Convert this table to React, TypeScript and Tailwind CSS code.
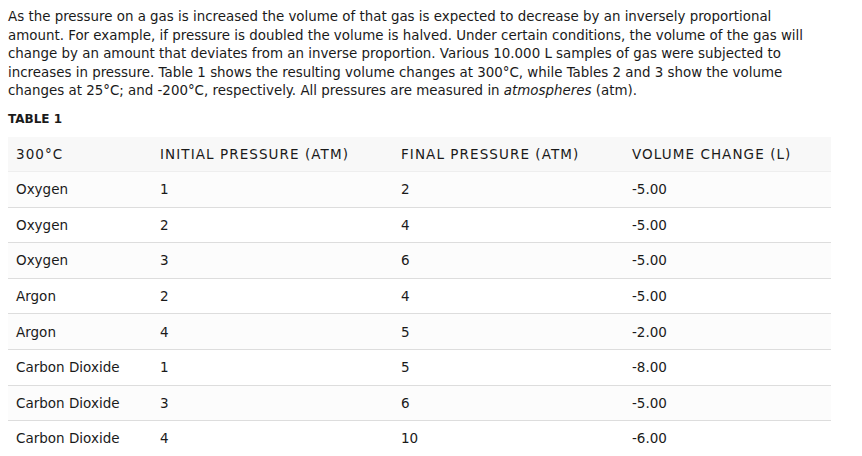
const rows: [string, string, string, string][] = [
  ['Oxygen', '1', '2', '-5.00'],
  ['Oxygen', '2', '4', '-5.00'],
  ['Oxygen', '3', '6', '-5.00'],
  ['Argon', '2', '4', '-5.00'],
  ['Argon', '4', '5', '-2.00'],
  ['Carbon Dioxide', '1', '5', '-8.00'],
  ['Carbon Dioxide', '3', '6', '-5.00'],
  ['Carbon Dioxide', '4', '10', '-6.00'],
]

const headers = ['300°C', 'INITIAL PRESSURE (ATM)', 'FINAL PRESSURE (ATM)', 'VOLUME CHANGE (L)']

export default function App() {
  return (
    <div className="bg-white px-2 pt-[8px] text-[#1a1a1a] font-['DejaVu_Sans',sans-serif]">
      <p className="text-[13.4px] leading-[18.5px] w-[818px]">
        As the pressure on a gas is increased the volume of that gas is expected to decrease by an inversely
        proportional amount. For example, if pressure is doubled the volume is halved. Under certain conditions, the
        volume of the gas will change by an amount that deviates from an inverse proportion. Various 10.000 L samples
        of gas were subjected to increases in pressure. Table 1 shows the resulting volume changes at 300°C, while
        Tables 2 and 3 show the volume changes at 25°C; and -200°C, respectively. All pressures are measured in{' '}
        <em>atmospheres</em> (atm).
      </p>
      <div className="mt-[10px] text-[12px] font-semibold leading-[16px]">TABLE 1</div>
      <table className="mt-[10px] w-[823px] border-collapse text-[13.5px]">
        <thead>
          <tr className="bg-[#f8f8f8] border-b border-[#eeeeee]">
            {headers.map((h, i) => (
              <th
                key={h}
                className={`h-[35px] text-left font-normal tracking-[0.08em] pl-2 ${
                  i === 0 ? 'w-[144px]' : i === 1 ? 'w-[241px]' : i === 2 ? 'w-[231px]' : ''
                }`}
              >
                {h}
              </th>
            ))}
          </tr>
        </thead>
        <tbody>
          {rows.map((r, idx) => (
            <tr key={idx} className={`${idx % 2 === 0 ? 'bg-[#fcfcfc]' : 'bg-white'} border-b border-[#dddddd]`}>
              {r.map((c, j) => (
                <td key={j} className="h-[35.6px] pl-2">
                  {c}
                </td>
              ))}
            </tr>
          ))}
        </tbody>
      </table>
    </div>
  )
}
